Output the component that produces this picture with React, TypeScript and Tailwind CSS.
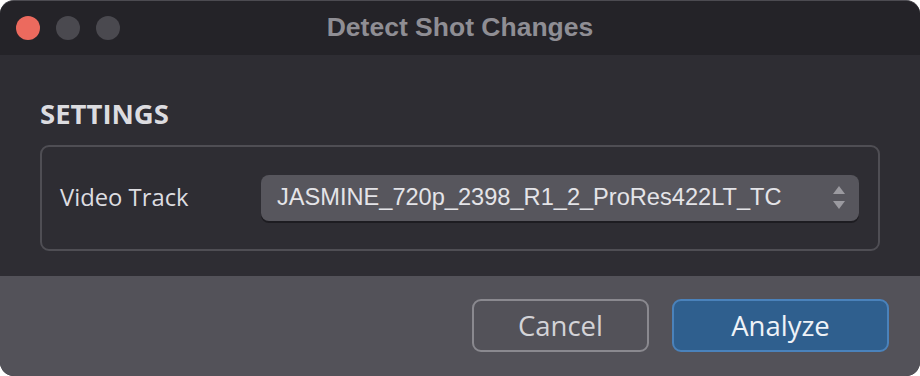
export default function App() {
  return (
    <div className="w-[920px] h-[376px] bg-white">
      <div className="w-full h-full rounded-[14px] overflow-hidden flex flex-col border-t border-[#4c4b51] bg-[#2e2d33]">
        {/* title bar */}
        <div className="relative h-[54px] shrink-0 bg-[#242328] flex items-center">
          <div className="flex items-center gap-4 pl-4">
            <span className="w-6 h-6 rounded-full bg-[#ec6a5e]" />
            <span className="w-6 h-6 rounded-full bg-[#4a494f]" />
            <span className="w-6 h-6 rounded-full bg-[#4a494f]" />
          </div>
          <p className="absolute inset-x-0 top-[9px] text-center text-[26.5px] leading-[34px] font-bold text-[#8f8e94] font-['Liberation_Sans',Arial,sans-serif]">
            Detect Shot Changes
          </p>
        </div>

        {/* content */}
        <div className="h-[221px] shrink-0 px-10 pt-[42px] font-['Open_Sans',sans-serif]">
          <p className="text-[27.5px] leading-[34px] font-bold text-[#dcdce0]">SETTINGS</p>
          <div className="mt-[14px] h-[106px] rounded-[9px] border-2 border-[#4f4e54] flex items-center pl-[18px] pr-[19px]">
            <p className="w-[201px] text-[23.8px] text-[#dddde1]">Video Track</p>
            <div className="flex-1 h-[46px] rounded-[8px] bg-[#57565d] shadow-[0_2px_0_#1d1c21] flex items-center pl-4 pr-3">
              <span className="flex-1 text-[23.6px] text-[#e4e4e8] font-['Liberation_Sans',Arial,sans-serif]">
                JASMINE_720p_2398_R1_2_ProRes422LT_TC
              </span>
              <svg width="14" height="26" viewBox="0 0 14 26" className="mr-[1px]">
                <path d="M7 1 L13 9 L1 9 Z" fill="#9b9aa0" />
                <path d="M1 16 L13 16 L7 24 Z" fill="#9b9aa0" />
              </svg>
            </div>
          </div>
        </div>

        {/* footer */}
        <div className="flex-1 bg-[#535259] flex justify-end items-start pt-[23px] pr-[31px] gap-[23px] font-['Open_Sans',sans-serif]">
          <button className="w-[177px] h-[53px] rounded-[9px] border-2 border-[#8a898f] text-[27.5px] text-[#d3d3d7] leading-none">
            Cancel
          </button>
          <button className="w-[217px] h-[53px] rounded-[9px] border-2 border-[#4a82bb] bg-[#2f5f8e] text-[27.5px] text-[#eef2f7] leading-none">
            Analyze
          </button>
        </div>
      </div>
    </div>
  );
}
